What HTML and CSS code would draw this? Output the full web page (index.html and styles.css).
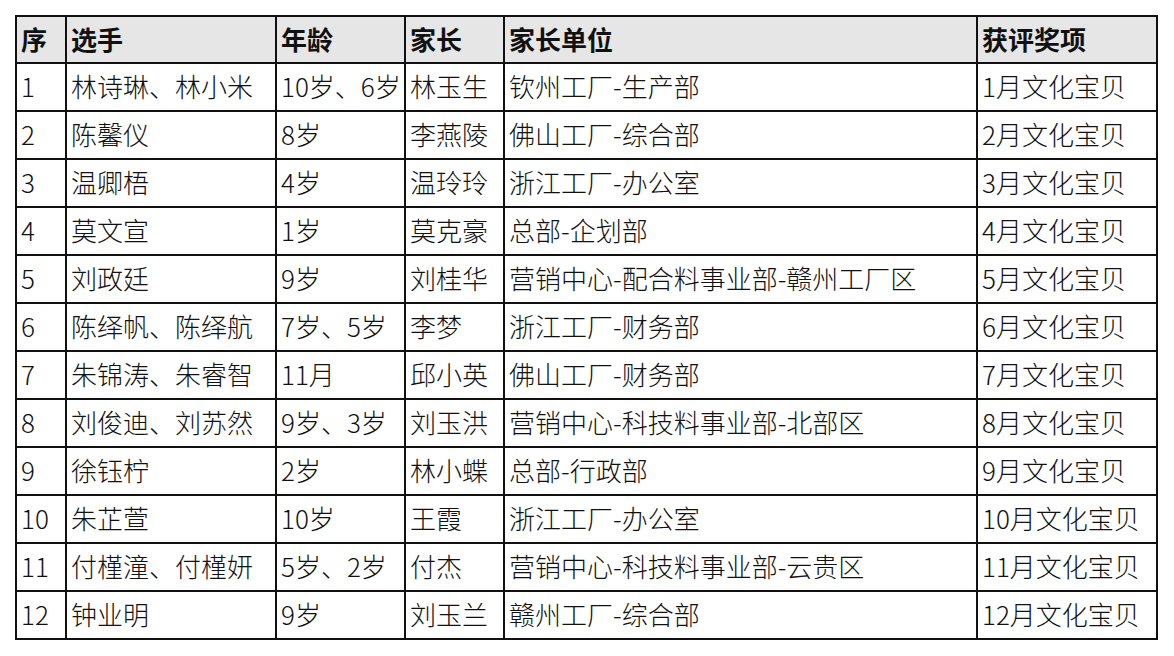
FILE: index.html
```html
<!DOCTYPE html>
<html lang="zh">
<head>
<meta charset="utf-8">
<title>文化宝贝</title>
<link rel="stylesheet" href="styles.css">
</head>
<body>
<table class="award-table">
  <colgroup>
    <col class="c-no">
    <col class="c-name">
    <col class="c-age">
    <col class="c-parent">
    <col class="c-unit">
    <col class="c-award">
  </colgroup>
  <thead>
    <tr><th>序</th><th>选手</th><th>年龄</th><th>家长</th><th>家长单位</th><th>获评奖项</th></tr>
  </thead>
  <tbody>
    <tr><td>1</td><td>林诗琳、林小米</td><td>10岁、6岁</td><td>林玉生</td><td>钦州工厂-生产部</td><td>1月文化宝贝</td></tr>
    <tr><td>2</td><td>陈馨仪</td><td>8岁</td><td>李燕陵</td><td>佛山工厂-综合部</td><td>2月文化宝贝</td></tr>
    <tr><td>3</td><td>温卿梧</td><td>4岁</td><td>温玲玲</td><td>浙江工厂-办公室</td><td>3月文化宝贝</td></tr>
    <tr><td>4</td><td>莫文宣</td><td>1岁</td><td>莫克豪</td><td>总部-企划部</td><td>4月文化宝贝</td></tr>
    <tr><td>5</td><td>刘政廷</td><td>9岁</td><td>刘桂华</td><td>营销中心-配合料事业部-赣州工厂区</td><td>5月文化宝贝</td></tr>
    <tr><td>6</td><td>陈绎帆、陈绎航</td><td>7岁、5岁</td><td>李梦</td><td>浙江工厂-财务部</td><td>6月文化宝贝</td></tr>
    <tr><td>7</td><td>朱锦涛、朱睿智</td><td>11月</td><td>邱小英</td><td>佛山工厂-财务部</td><td>7月文化宝贝</td></tr>
    <tr><td>8</td><td>刘俊迪、刘苏然</td><td>9岁、3岁</td><td>刘玉洪</td><td>营销中心-科技料事业部-北部区</td><td>8月文化宝贝</td></tr>
    <tr><td>9</td><td>徐钰柠</td><td>2岁</td><td>林小蝶</td><td>总部-行政部</td><td>9月文化宝贝</td></tr>
    <tr><td>10</td><td>朱芷萱</td><td>10岁</td><td>王霞</td><td>浙江工厂-办公室</td><td>10月文化宝贝</td></tr>
    <tr><td>11</td><td>付槿潼、付槿妍</td><td>5岁、2岁</td><td>付杰</td><td>营销中心-科技料事业部-云贵区</td><td>11月文化宝贝</td></tr>
    <tr><td>12</td><td>钟业明</td><td>9岁</td><td>刘玉兰</td><td>赣州工厂-综合部</td><td>12月文化宝贝</td></tr>
  </tbody>
</table>
</body>
</html>
```
FILE: styles.css
```css
html, body {
  margin: 0;
  padding: 0;
  background: #ffffff;
}
body {
  padding: 15px 0 0 15px;
  font-family: "Noto Sans CJK SC", "Noto Sans", sans-serif;
  color: #111111;
}
.award-table {
  border-collapse: collapse;
  table-layout: fixed;
  width: 1143px;
}
.c-no { width: 50px; }
.c-name { width: 210px; }
.c-age { width: 129px; }
.c-parent { width: 99px; }
.c-unit { width: 473px; }
.c-award { width: 180px; }
.award-table th,
.award-table td {
  border: 2px solid #111111;
  padding: 0 0 2px 4px;
  text-align: left;
  vertical-align: middle;
  white-space: nowrap;
  overflow: hidden;
  font-size: 26px;
  line-height: 30px;
}
.award-table th {
  height: 43px;
  background: #e6e6e6;
  font-weight: 700;
}
.award-table td {
  height: 44px;
  font-weight: 300;
}
```
